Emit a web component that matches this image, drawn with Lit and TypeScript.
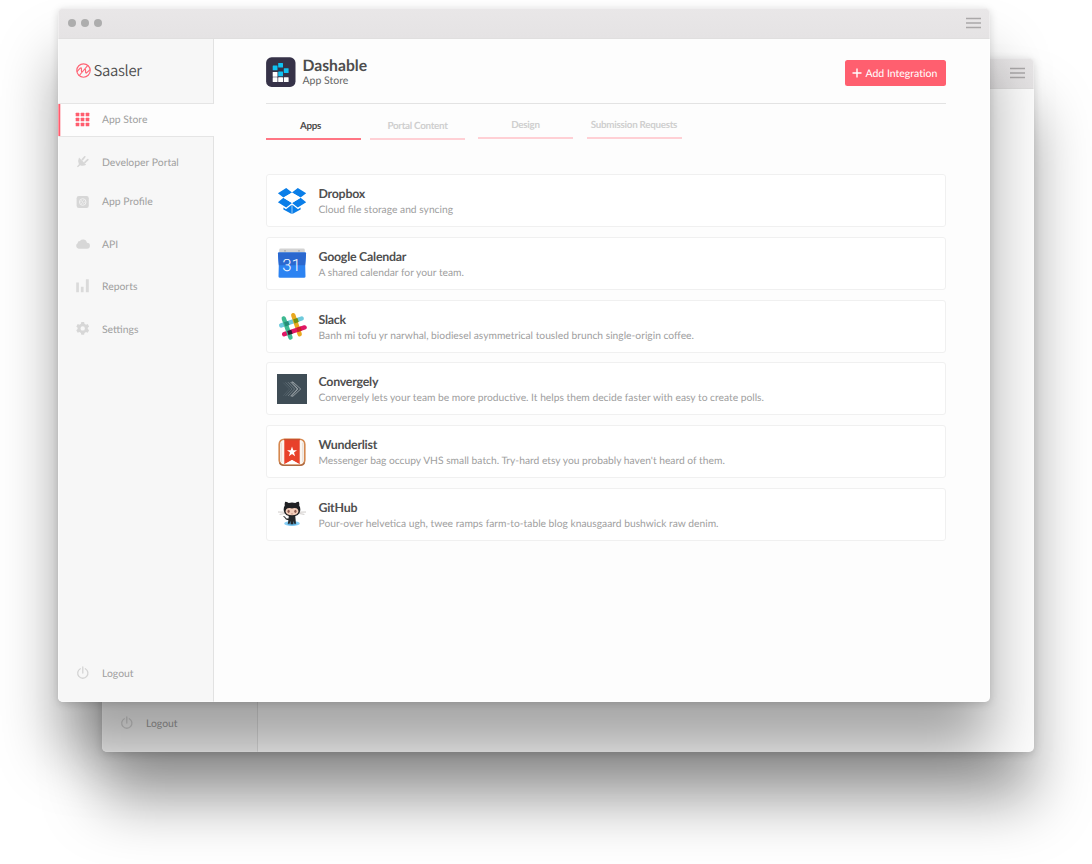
import { LitElement, html, svg, css, nothing, type TemplateResult } from "lit";
import { customElement, property } from "lit/decorators.js";

const icons: Record<string, TemplateResult> = {
  grid: svg`<g fill="#ff5d6e">${[0, 5, 10].map((y) => [0, 5, 10].map((x) => svg`<rect x=${x - 0.3} y=${y - 0.2} width="3.6" height="3.5" rx=".5"/>`))}</g>`,
  plug: svg`<path d="M3 2.6L10.2 9.7Q7 11.6 4.2 10.2L1.9 12.2 1 11.4 2.9 9.2Q1.4 5.8 3 2.6Z" fill="#d7d7d7"/><path d="M6.4 4.6L8.8 1.8M8.9 7.4L11.8 4.7" stroke="#d7d7d7" stroke-width="1.7" stroke-linecap="round"/>`,
  profile: svg`<rect x=".6" y="2" width="12.2" height="12" rx="2.2" fill="#d7d7d7"/><circle cx="6.7" cy="8" r="3.3" fill="none" stroke="#f1f1f1" stroke-width="1"/><path d="M4 8.4L5.9 6.6 7.3 9.4 9.2 7.6M5.2 10.3L6.1 8.8M7.4 6.8L8.1 5.6" stroke="#f1f1f1" stroke-width=".8" fill="none"/>`,
  cloud: svg`<path d="M2.5 11.7A3 3 0 0 1 1.6 6.2 2.3 2.3 0 0 1 3.9 3.9 4.1 4.1 0 0 1 11 5.7 3 3 0 0 1 10.9 11.7Z" fill="#d7d7d7"/>`,
  bars: svg`<path d="M.2 3.4H2.9V13.2H.2ZM4.9 7.7H7.6V13.2H4.9ZM9.9 .3H12.8V13.2H9.9Z" fill="#dadada"/>`,
  gear: svg`<path transform="translate(-.3 -.6)" fill-rule="evenodd" fill="#d7d7d7" d="M5.6.6H8.4L8.8 2.4 10.3 3.3 12 2.7 13.4 5.1 12.1 6.3V7.7L13.4 8.9 12 11.3 10.3 10.7 8.8 11.6 8.4 13.4H5.6L5.2 11.6 3.7 10.7 2 11.3.6 8.9 1.9 7.7V6.3L.6 5.1 2 2.7 3.7 3.3 5.2 2.4ZM7 4.8A2.2 2.2 0 1 0 7 9.2 2.2 2.2 0 1 0 7 4.8Z"/>`,
  power: svg`<path d="M4.3 2.7A5.1 5.1 0 1 0 9.3 2.7M6.8 1V7" fill="none" stroke="#d4d4d4" stroke-width="1.3" stroke-linecap="round"/>`,
};

const logos: Record<string, TemplateResult> = {
  dropbox: svg`<g fill="#0a7ee8"><path d="M9.2 2L15 6.6 6.4 11.6.9 7.2ZM20.8 2L29.2 7.2 23.6 11.6 15 6.6ZM.9 16.3L6.4 11.8 15 17.1 9.2 21.5ZM29.2 16.3L23.6 11.8 15 17.1 20.8 21.5Z"/><path d="M6.4 21.6L9 23.3 14.7 18.8V28L6.4 23.6ZM23.6 21.6L21 23.3 15.3 18.8V28L23.6 23.6Z"/></g><path d="M6.4 11.8L15 6.8 23.6 11.8 15 17Z" fill="#fff"/>`,
  calendar: svg`<rect x="2.2" y=".6" width="25.6" height="8" rx="1.4" fill="#d3d3d3"/><circle cx="8" cy="2.8" r=".9" fill="#aaa"/><circle cx="22" cy="2.8" r=".9" fill="#aaa"/><path d="M1.8 4.6H28.2Q29.2 4.6 29.1 5.6L28.2 16.8 28.5 28.4Q28.5 29.8 27 29.8H3Q1.5 29.8 1.5 28.4L1.8 16.8.9 5.6Q.8 4.6 1.8 4.6Z" fill="#2c83f2"/><path d="M1.8 4.6H28.2Q29.2 4.6 29.1 5.6L28.2 17.2H1.8L.9 5.6Q.8 4.6 1.8 4.6Z" fill="#2b68cf"/><text x="14.6" y="23.3" text-anchor="middle" font-family="Roboto, sans-serif" font-weight="300" font-size="16.8" fill="#f4f8ff">31</text>`,
  slack: svg`<g stroke-width="4.4" stroke-linecap="round"><path d="M4.2 14.4L24.7 7.5" stroke="#6ecadc"/><path d="M16.3 4.2L22.7 23.2" stroke="#e9a820"/><path d="M7.2 23.2L27.6 16.4" stroke="#e01765"/><path d="M6.8 7.4L13.5 26.5" stroke="#3eb991"/></g><path d="M7 11.3L11.2 9.9 12.6 14 8.4 15.4Z" fill="#248f78"/><path d="M16.2 8.3L20.4 6.9 21.8 11 17.6 12.4Z" fill="#71910f"/><path d="M10.1 20.1L14.3 18.7 15.6 22.7 11.4 24.1Z" fill="#381b32"/><path d="M19.3 17L23.5 15.6 24.8 19.6 20.6 21Z" fill="#cb2025"/>`,
  convergely: svg`<rect width="30" height="30" fill="#3f4d56"/><g fill="none" stroke-width=".8"><path d="M6.2 8.6L12.5 15 6.2 21.8" stroke="#53616a"/><path d="M8.5 8.4L15 15 8.5 21.9" stroke="#65727a"/><path d="M11 8.2L17.6 15 11 22" stroke="#7b868d"/><path d="M13.5 8L20.3 15 13.5 22.2" stroke="#939ca1"/><path d="M16 8L23.7 15 16 22.2H14.4L20.8 15 14.7 8Z" stroke="#aab1b5"/></g>`,
  wunderlist: svg`<rect x="2.2" y="2.2" width="25.6" height="26" rx="5" fill="#fbf5ef" stroke="#d5884f" stroke-width="1.6"/><path d="M4.2 5.8V25M25.8 5.8V25" stroke="#ddd1c8" stroke-width=".8"/><path d="M2.4 25.5Q3.4 28.3 7 28.3H23Q26.6 28.3 27.6 25.5" stroke="#ac6a43" stroke-width="1.2" fill="none"/><path d="M7.3 2H22.7V27.3L15 23 7.3 27.3Z" fill="#e8412a"/><path d="M7.3 2.6H22.7" stroke="#c9502f" stroke-width="1.4"/><path d="M8 26.9L15 23 22 26.9Z" fill="#fff"/><path d="M15 9.6L16.3 13.3H20L17 15.6 18.1 19.3 15 17.1 11.9 19.3 13 15.6 10 13.3H13.7Z" fill="#fff"/>`,
  github: svg`<ellipse cx="15" cy="24.4" rx="7.8" ry="2.5" fill="#86cdf4"/><ellipse cx="15" cy="24.8" rx="4.6" ry="1.5" fill="#5faedd"/><path d="M1 13L8.5 13.2M2.6 15.4L8.5 14.4M29 13L21.5 13.2M27.4 15.4L21.5 14.4" stroke="#c4bfbd" stroke-width=".8"/><path d="M11.8 16.6H18.2L19 24.8H17.2L16.6 22 16.3 25.2H13.7L13.3 22 12.6 24.8H10.8L11.4 21.2Q8.3 21.1 7.7 18.7L6 17.4Q8 17.1 8.8 18.7 9.8 20 11.5 19.4Z" fill="#25282b"/><path d="M8.2 2.7Q10 2.8 11.7 4 15 3.2 18.3 4 20 2.8 21.8 2.7 22.6 4.8 22.2 6.5 23.7 8.6 23.2 11.7 22.5 17.2 15 17.2 7.5 17.2 6.8 11.7 6.3 8.6 7.8 6.5 7.4 4.8 8.2 2.7Z" fill="#202124"/><path d="M10.7 9.3Q13 8.9 15 9.4 17 8.9 19.3 9.3 21.5 10.1 21.5 12.3 21.1 16.2 15 16.2 8.9 16.2 8.5 12.3 8.5 10.1 10.7 9.3Z" fill="#f3cdb9"/><ellipse cx="11.6" cy="12.3" rx="1.1" ry="1.6" fill="#8d5b50"/><ellipse cx="18.4" cy="12.3" rx="1.1" ry="1.6" fill="#8d5b50"/><path d="M14.2 14.9H15.8" stroke="#a2685a" stroke-width=".6"/>`,
};

interface NavEntry { id: string; icon: string; label: string }
const nav: NavEntry[] = [
  { id: "store", icon: "grid", label: "App Store" },
  { id: "dev", icon: "plug", label: "Developer Portal" },
  { id: "profile", icon: "profile", label: "App Profile" },
  { id: "api", icon: "cloud", label: "API" },
  { id: "reports", icon: "bars", label: "Reports" },
  { id: "settings", icon: "gear", label: "Settings" },
];

const tabs = ["Apps", "Portal Content", "Design", "Submission Requests"];

const apps = [
  { logo: "dropbox", name: "Dropbox", text: "Cloud file storage and syncing" },
  { logo: "calendar", name: "Google Calendar", text: "A shared calendar for your team." },
  { logo: "slack", name: "Slack", text: "Banh mi tofu yr narwhal, biodiesel asymmetrical tousled brunch single-origin coffee." },
  { logo: "convergely", name: "Convergely", text: "Convergely lets your team be more productive. It helps them decide faster with easy to create polls." },
  { logo: "wunderlist", name: "Wunderlist", text: "Messenger bag occupy VHS small batch. Try-hard etsy you probably haven't heard of them." },
  { logo: "github", name: "GitHub", text: "Pour-over helvetica ugh, twee ramps farm-to-table blog knausgaard bushwick raw denim." },
];

@customElement("app-card")
class AppCard extends LitElement {
  @property() logo = "";
  @property() name = "";
  @property() text = "";

  static styles = css`
    :host { display: flex; align-items: center; box-sizing: border-box; height: 53px; padding-left: 10px; gap: 12px;
      background: #fff; border: 1px solid #f0f0f0; border-radius: 3px; }
    .logo { display: block; width: 30px; height: 30px; flex: none; }
    .copy { padding-top: 4px; }
    .name { font-size: 12.4px; line-height: 16px; font-weight: 700; color: #505050; letter-spacing: -.25px; }
    .text { font-size: 10.27px; line-height: 17px; color: #a0a0a0; white-space: nowrap; }
  `;

  render() {
    return html`
      <svg class="logo" viewBox="0 0 30 30">${logos[this.logo]}</svg>
      <div class="copy">
        <div class="name">${this.name}</div>
        <div class="text">${this.text}</div>
      </div>`;
  }
}

@customElement("desktop-window")
class DesktopWindow extends LitElement {
  @property({ type: Boolean }) blank = false;

  static styles = css`
    :host { display: flex; flex-direction: column; width: 932px; height: 694px; border-radius: 5px; background: #fdfdfd;
      box-shadow: 0 51px 60px rgba(0, 0, 0, .345), 0 2px 8px rgba(0, 0, 0, .15); overflow: hidden; position: relative; }
    :host::after { content: ""; position: absolute; inset: 0; border-radius: 5px; pointer-events: none;
      box-shadow: inset 0 0 0 1px rgba(255, 255, 255, .35); }
    .bar { display: flex; align-items: center; justify-content: space-between; height: 31px; flex: none; box-sizing: border-box;
      padding: 0 9px 0 10px; background: linear-gradient(#e9e7e8, #e5e3e4); border-bottom: 1px solid #e0dfdf; }
    .dots { display: flex; gap: 5px; }
    .dot { width: 8px; height: 8px; border-radius: 50%; background: #adadad; }
    .menu { width: 15px; height: 12px; display: block; }
    .body { display: flex; flex: 1; min-height: 0; }
    .side { display: flex; flex-direction: column; width: 156px; flex: none; box-sizing: border-box; background: #f7f7f7; }
    .brand { display: flex; align-items: center; gap: 3px; height: 65px; box-sizing: border-box; padding: 0 0 2px 17.5px;
      border-right: 1px solid #e2e2e2; border-bottom: 1px solid #e5e5e5; }
    .mark { width: 15px; height: 15px; }
    .wordmark { font: 350 14.9px/24px "Noto Sans CJK SC", "Open Sans", sans-serif; color: #4d4d4d; letter-spacing: -.3px; padding-top: 1px; }
    .item { display: flex; align-items: center; gap: 12px; height: 28px; padding-left: 18px; font-size: 10.4px; color: #a0a0a0; }
    .item svg { width: 14px; height: 14px; display: block; overflow: visible; }
    .item span { padding-top: 1px; }
    .store { height: 32px; box-sizing: border-box; padding-bottom: 1px; background: #fdfdfd; box-shadow: inset 2.3px 0 #ff5d6e; }
    .rest { flex: 1; display: flex; flex-direction: column; border-right: 1px solid #e2e2e2; border-top: 1px solid #e5e5e5; padding-bottom: 15px; }
    .blank .rest { border-top: 0; }
    .dev { margin-top: 11px; }
    .profile { margin-top: 11px; }
    .api { margin-top: 15px; }
    .reports { margin-top: 14px; }
    .settings { margin-top: 15px; }
    .logout { margin-top: auto; }
    .main { flex: 1; }
  `;

  private item(n: NavEntry) {
    return html`<div class="item ${n.id}"><svg viewBox="0 0 14 14">${icons[n.icon]}</svg><span>${n.label}</span></div>`;
  }

  render() {
    return html`
      <div class="bar">
        <div class="dots"><i class="dot"></i><i class="dot"></i><i class="dot"></i></div>
        <svg class="menu" viewBox="0 0 15 12"><path d="M0 1.5H15M0 6H15M0 10.5H15" stroke="#aaa8a9" stroke-width="1.3"/></svg>
      </div>
      <div class="body ${this.blank ? "blank" : ""}">
        <div class="side">
          ${this.blank ? nothing : html`
            <div class="brand">
              <svg class="mark" viewBox="0 0 15 15"><g fill="none" stroke="#ff6475" stroke-width="1.15" stroke-linecap="round" stroke-linejoin="round"><circle cx="7.5" cy="7.5" r="6.7"/><path d="M1.2 8.3L4.2 5.2Q5.3 4.2 5.4 5.7L5.5 8.2Q5.7 9.7 6.7 8.5L11.6 2.7M3.3 12.5L8.3 6.5Q9.3 5.4 9.5 6.9L9.6 9.2Q9.8 10.7 10.8 9.7L13.8 6.8"/></g></svg>
              <span class="wordmark">Saasler</span>
            </div>
            ${this.item(nav[0])}`}
          <div class="rest">
            ${this.blank ? nothing : nav.slice(1).map((n) => this.item(n))}
            ${this.item({ id: "logout", icon: "power", label: "Logout" })}
          </div>
        </div>
        <div class="main"><slot></slot></div>
      </div>`;
  }
}

@customElement("app-root")
class AppRoot extends LitElement {
  static styles = css`
    :host { display: block; position: relative; width: 1092px; height: 864px; overflow: hidden; background: #fff;
      font-family: Lato, "Open Sans", sans-serif; text-rendering: geometricPrecision; }
    .back { position: absolute; left: 102px; top: 58px; }
    .front { position: absolute; left: 58px; top: 8px; }
    .page { padding: 18px 44.5px 0 51.5px; }
    .head { display: flex; align-items: flex-start; height: 47px; border-bottom: 1px solid #e3e3e3; box-sizing: border-box; }
    .logo { width: 30px; height: 30px; display: block; }
    .titles { margin: 0 auto 0 7px; padding-top: 1px; }
    .title { font-size: 15.7px; line-height: 17px; font-weight: 700; color: #4d4d4d; }
    .sub { font-size: 10.5px; line-height: 13px; color: #666; }
    .add { display: flex; align-items: center; gap: 4px; box-sizing: border-box; width: 101px; height: 26px; margin-top: 3px; padding: 0 0 0 7px;
      background: #ff5f6f; border-radius: 2.5px; color: #fff; font-size: 10.5px; white-space: nowrap; font-variant-ligatures: none; }
    .add span { padding-top: 2px; }
    .add svg { width: 10px; height: 10px; flex: none; }
    .tabs { display: flex; align-items: flex-start; gap: 13.5px; height: 36px; }
    .tab { box-sizing: border-box; width: 95px; height: 35px; padding-top: 15px; text-align: center; font-size: 9.8px; line-height: 13px; letter-spacing: -.27px;
      font-weight: 700; color: #cfcfcf; border-bottom: 2px solid #ffd0d5; white-space: nowrap; }
    .tab:nth-child(2) { height: 36px; padding-top: 16px; padding-left: 1px; }
    .tab.on { height: 36px; padding: 16px 5px 0 0; color: #4d4d4d; border-color: #ff7684; margin-right: -4.5px; }
    .list { display: flex; flex-direction: column; gap: 9.8px; margin-top: 34px; }
  `;

  render() {
    const white = [[6.7, 15], [6.7, 20.2], [12.2, 20.2], [17.8, 20.2]];
    const blue = [[6.7, 8.6], [12.2, 6], [17.8, 11.3], [12.2, 14.6]];
    return html`
      <desktop-window class="back" blank></desktop-window>
      <desktop-window class="front">
        <div class="page">
          <div class="head">
            <svg class="logo" viewBox="0 0 30 30"><rect x=".1" y=".3" width="29.4" height="29.6" rx="5.5" fill="#363248"/>
              <g fill="#fff">${white.map(([x, y]) => svg`<rect x=${x} y=${y} width="4.8" height="4.8" rx=".5"/>`)}</g>
              <g fill="#10c2f2">${blue.map(([x, y]) => svg`<rect x=${x} y=${y} width="4.8" height="4.6" rx=".5"/>`)}</g>
            </svg>
            <div class="titles"><div class="title">Dashable</div><div class="sub">App Store</div></div>
            <div class="add"><svg viewBox="0 0 10 10"><path d="M5 .5V9.5M.5 5H9.5" stroke="#fff" stroke-width="1.4"/></svg><span>Add Integration</span></div>
          </div>
          <div class="tabs">
            ${tabs.map((t, i) => html`<div class="tab ${i ? "" : "on"}">${t}</div>`)}
          </div>
          <div class="list">
            ${apps.map((a) => html`<app-card .logo=${a.logo} .name=${a.name} .text=${a.text}></app-card>`)}
          </div>
        </div>
      </desktop-window>`;
  }
}
